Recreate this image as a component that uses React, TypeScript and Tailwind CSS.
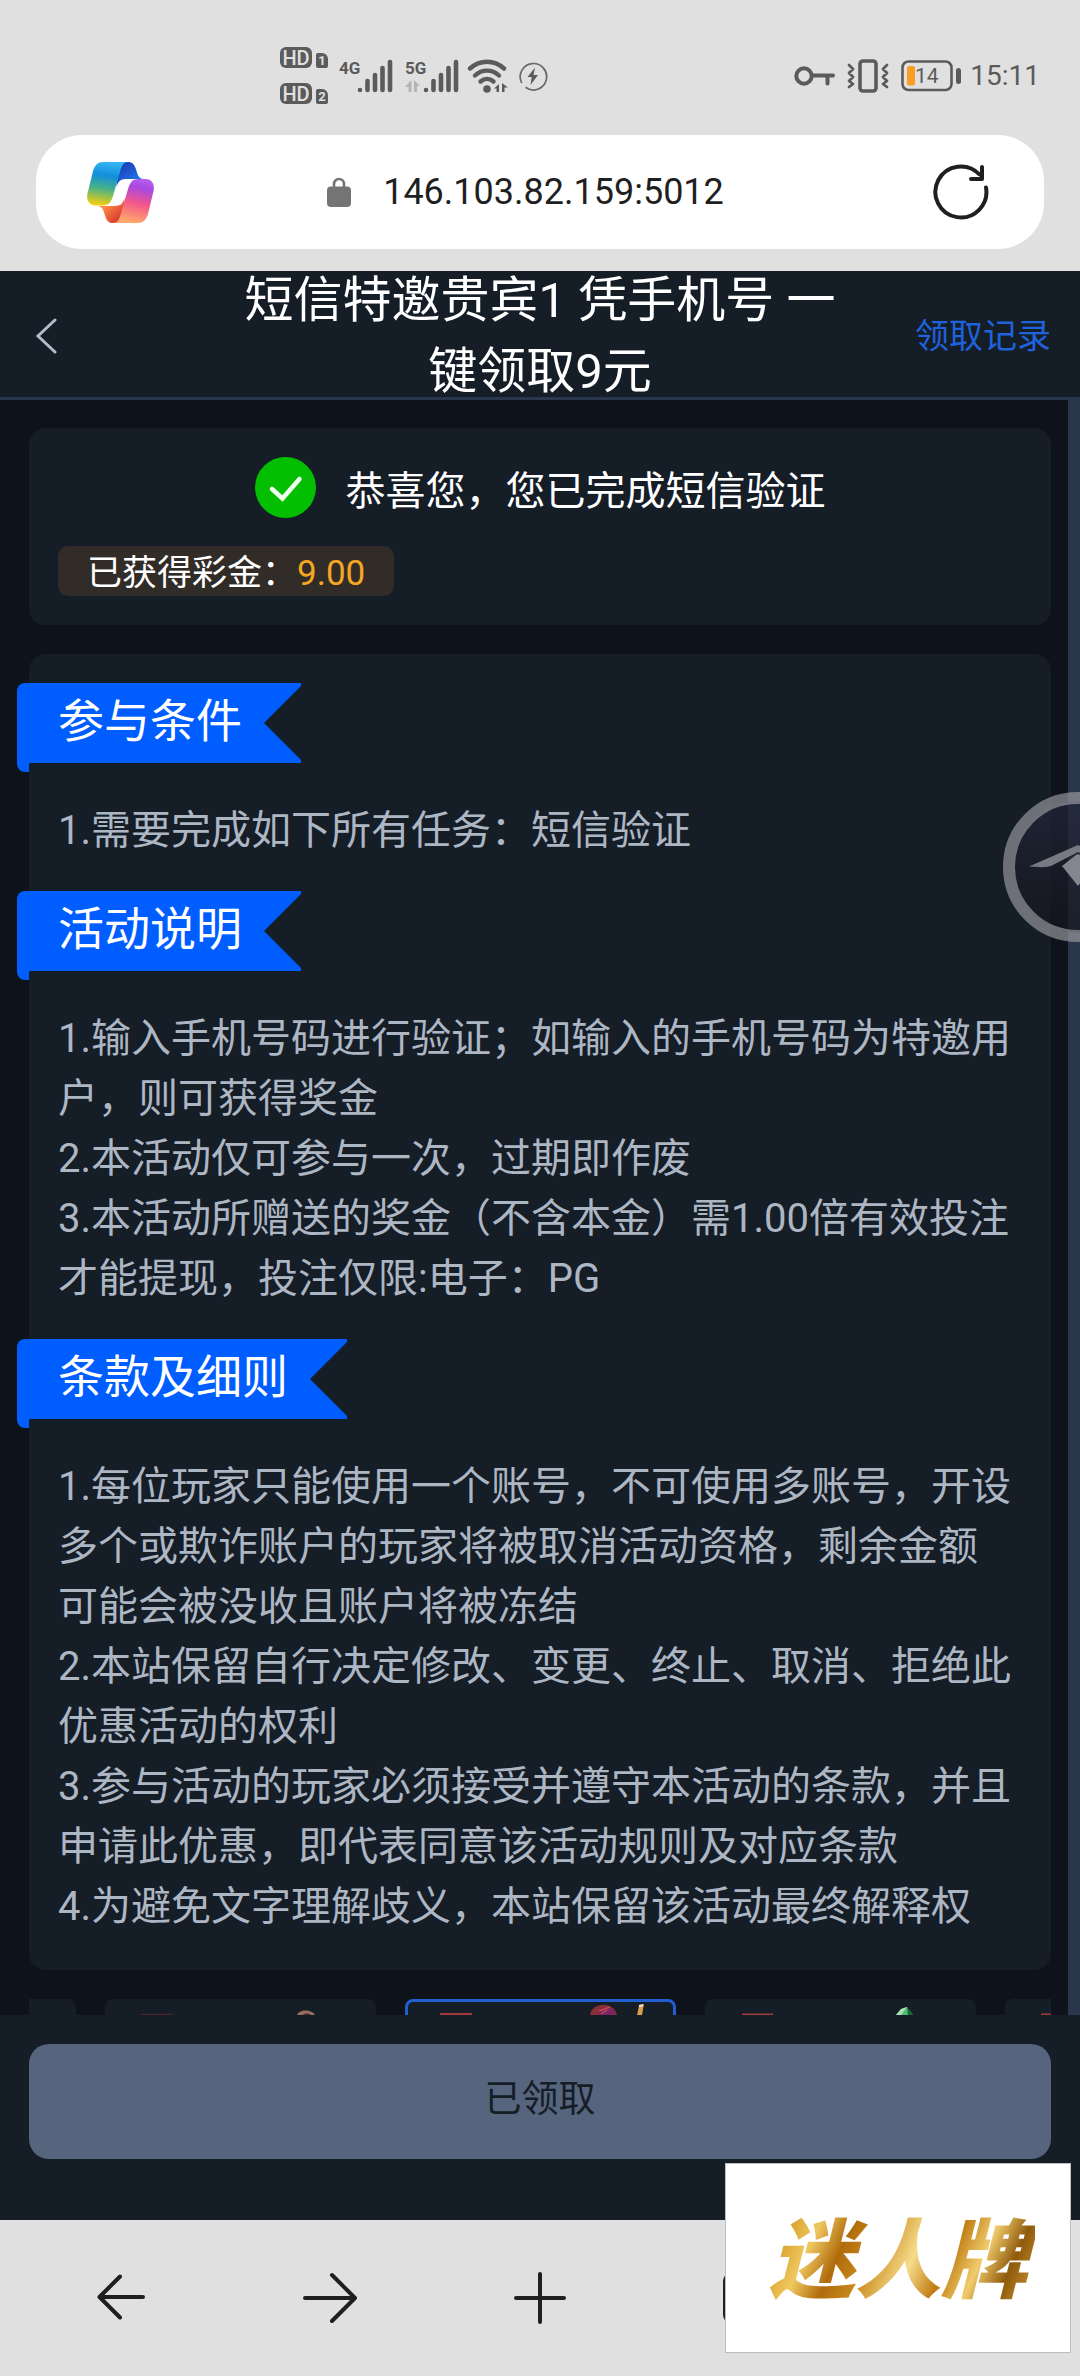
import { useState } from "react";

const sections = [
  { title: "参与条件", lines: ["1.需要完成如下所有任务：短信验证"] },
  {
    title: "活动说明",
    lines: [
      "1.输入手机号码进行验证；如输入的手机号码为特邀用户，则可获得奖金",
      "2.本活动仅可参与一次，过期即作废",
      "3.本活动所赠送的奖金（不含本金）需1.00倍有效投注才能提现，投注仅限:电子：PG",
    ],
  },
  {
    title: "条款及细则",
    lines: [
      "1.每位玩家只能使用一个账号，不可使用多账号，开设多个或欺诈账户的玩家将被取消活动资格，剩余金额可能会被没收且账户将被冻结",
      "2.本站保留自行决定修改、变更、终止、取消、拒绝此优惠活动的权利",
      "3.参与活动的玩家必须接受并遵守本活动的条款，并且申请此优惠，即代表同意该活动规则及对应条款",
      "4.为避免文字理解歧义，本站保留该活动最终解释权",
    ],
  },
];

function HdBadge({ sim }: { sim: string }) {
  return (
    <div className="flex items-end gap-1">
      <span className="flex h-[21px] w-8 items-center justify-center rounded-md bg-[#5b5b5b] text-xl leading-none font-medium text-[#e0e0e0]">
        HD
      </span>
      <span className="flex h-[15px] w-3 items-center justify-center rounded-xs rounded-tr-md bg-[#5b5b5b] text-[13px] leading-none font-bold text-[#e0e0e0]">
        {sim}
      </span>
    </div>
  );
}

function Signal({ label, data }: { label: string; data?: boolean }) {
  return (
    <svg width="54" height="34" viewBox="0 0 54 34" fill="none">
      <text x="0" y="15" fontSize="17" fontWeight="700" fill="#5b5b5b" fontFamily="'Liberation Sans Narrow', Roboto, sans-serif">
        {label}
      </text>
      {data && (
        <path d="M6.500 21v12h-3v-5H0zM9 33V21l6 6h-3v6z" fill="#b4b4b4" />
      )}
      <path
        d="M21 31v0M28.500 31V22M36 31V16M43.500 31V9M51 31V3"
        stroke="#5b5b5b"
        strokeWidth="4.600"
        strokeLinecap="round"
      />
    </svg>
  );
}

function StatusBar() {
  return (
    <div className="flex h-[135px] items-center justify-between pt-4 pr-10 pl-[280px] text-[#5b5b5b]">
      <div className="flex items-center">
        <div className="flex flex-col gap-[15px]">
          <HdBadge sim="1" />
          <HdBadge sim="2" />
        </div>
        <div className="ml-[11px] flex items-center gap-3">
          <Signal label="4G" />
          <Signal label="5G" data />
        </div>
        <svg className="ml-2" width="42" height="34" viewBox="0 0 42 34" fill="none">
          <g stroke="#5b5b5b" strokeWidth="4.400" strokeLinecap="round">
            <path d="M3 9.500C13 .5 27 .5 37 9.500" />
            <path d="M8 16.500c7-6.500 17-6.500 24 0" />
            <path d="M13.500 22.500c4-3.500 9-3.500 13 0" />
          </g>
          <circle cx="20" cy="30" r="3.800" fill="#5b5b5b" />
          <path d="M32 25v8h-2.500v-3.500H27zM35 33v-9l6 4.500h-3.500V33z" fill="#5b5b5b" />
        </svg>
        <svg className="ml-[9px]" width="30" height="30" viewBox="0 0 30 30" fill="none">
          <path d="M7.500 26.300A13.200 13.200 0 1 0 3.800 22" stroke="#6a6a6a" strokeWidth="1.700" />
          <path d="M17 6.500 9.500 16h4.200l-1.200 8L20 14h-4.500z" fill="#5b5b5b" />
        </svg>
      </div>
      <div className="flex items-center">
        <svg width="42" height="20" viewBox="0 0 42 20" fill="none" stroke="#5b5b5b">
          <circle cx="10" cy="10" r="7.700" strokeWidth="4" />
          <path d="M18 9.500h21M33.500 9.500v8" strokeWidth="4" strokeLinecap="round" />
        </svg>
        <svg className="ml-[11px]" width="42" height="34" viewBox="0 0 42 34" fill="none" stroke="#5b5b5b">
          <rect x="13" y="2" width="16" height="30" rx="3" strokeWidth="3.600" />
          <path
            d="M2 6l4 4-4 4 4 4-4 4 4 3-4 3M40 6l-4 4 4 4-4 4 4 4-4 3 4 3"
            strokeWidth="2.800"
            strokeLinecap="round"
            strokeLinejoin="round"
          />
        </svg>
        <svg className="ml-3" width="61" height="32" viewBox="0 0 61 32" fill="none">
          <rect x="1.500" y="1.500" width="49" height="28.500" rx="6" stroke="#5b5b5b" strokeWidth="2.600" />
          <rect x="6" y="6" width="8" height="19.500" rx="2.500" fill="#f99d24" />
          <rect x="55" y="8" width="5" height="16" rx="2.500" fill="#5b5b5b" />
          <text x="14" y="23" fontSize="21" fill="#5b5b5b" fontFamily="Roboto, sans-serif">
            14
          </text>
        </svg>
        <span className="ml-2 text-[28px] leading-8">15:11</span>
      </div>
    </div>
  );
}

function CopilotLogo() {
  return (
    <svg width="67" height="61" viewBox="0 0 67 61" fill="none">
      <defs>
        <linearGradient id="cool" x1="18" y1="0" x2="12" y2="43" gradientUnits="userSpaceOnUse">
          <stop offset="0" stopColor="#35b4f2" />
          <stop offset="0.300" stopColor="#118fdc" />
          <stop offset="0.600" stopColor="#45b08a" />
          <stop offset="1" stopColor="#f3d10e" />
        </linearGradient>
        <linearGradient id="warm" x1="54" y1="17" x2="44" y2="60" gradientUnits="userSpaceOnUse">
          <stop offset="0" stopColor="#b85cf0" />
          <stop offset="0.200" stopColor="#a84ae0" />
          <stop offset="0.550" stopColor="#f2558b" />
          <stop offset="1" stopColor="#ffa968" />
        </linearGradient>
        <linearGradient id="blue" x1="36" y1="2" x2="48" y2="18" gradientUnits="userSpaceOnUse">
          <stop offset="0" stopColor="#1a3fb8" />
          <stop offset="1" stopColor="#2070e6" />
        </linearGradient>
        <linearGradient id="orange" x1="18" y1="44" x2="32" y2="58" gradientUnits="userSpaceOnUse">
          <stop offset="0" stopColor="#ff8a48" />
          <stop offset="1" stopColor="#d93a30" />
        </linearGradient>
      </defs>
      <path d="M30 0h11c4 0 6 2 7.500 6l2 6c1.200 3.500 3 5 7 5H39c-6 0-8 3-9.500 8z" fill="url(#blue)" />
      <path d="M37 61H26c-4 0-6-2-7.500-6l-2-6c-1.200-3.500-3-5-7-5H28c6 0 8-3 9.500-8z" fill="url(#orange)" />
      <path d="M16 0h25c-4 0-6 3-7.500 8L26 34c-2 6-4 9.500-10 9.500H9c-7 0-10-5-8.500-12L6 9C8 3 11 0 16 0z" fill="url(#cool)" />
      <path d="M51 61H26c4 0 6-3 7.500-8L41 27c2-6 4-10 10-10h7c7 0 10 5 8.500 12L61 52c-2 6-5 9-10 9z" fill="url(#warm)" />
    </svg>
  );
}

function AddressBar() {
  return (
    <div className="mx-9 mb-[22px] flex h-[114px] items-center rounded-[46px] bg-white pr-[55px] pl-[51px]">
      <CopilotLogo />
      <div className="flex flex-1 items-center justify-center gap-8 pr-9">
        <svg width="24" height="30" viewBox="0 0 24 30" fill="none">
          <path d="M7 12V7a5 5 0 0 1 10 0v5" stroke="#747474" strokeWidth="2.600" />
          <rect y="9.500" width="24" height="20.500" rx="4" fill="#747474" />
        </svg>
        <span className="text-4xl text-[#1f1f1f]">146.103.82.159:5012</span>
      </div>
      <button type="button" aria-label="刷新">
        <svg width="56" height="56" viewBox="0 0 56 56" fill="none" stroke="#1f1f1f" strokeWidth="4" strokeLinecap="round">
          <path d="M53 23.500A25.500 25.500 0 1 1 46.500 10.500" />
          <path d="M49 3v12H38" strokeLinejoin="round" />
        </svg>
      </button>
    </div>
  );
}

function Ribbon({ title }: { title: string }) {
  return (
    <div className="-ml-[41px]">
      <h2 className="flex h-20 w-fit items-center rounded-tl-lg bg-[#005dff] pr-[59px] pb-1 pl-[41px] text-[46px] leading-none text-white [clip-path:polygon(0_0,100%_0,100%_3px,calc(100%-37px)_50%,100%_calc(100%-3px),100%_100%,0_100%)]">
        {title}
      </h2>
      <div className="h-[9px] w-3 rounded-bl-lg bg-[#005dff]" />
    </div>
  );
}

/* Row of promo cards, only the top edge peeks out above the action bar */
function PromoStrip() {
  return (
    <div className="flex h-4 justify-center gap-[29px] overflow-hidden">
      <div className="h-32 w-[271px] shrink-0 rounded-lg bg-[#151d27]" />
      <div className="h-32 w-[271px] shrink-0 rounded-lg bg-[#151d27]">
        <svg width="271" height="16" viewBox="0 0 271 16">
          <path d="M36 15.500h32" stroke="#4d2229" strokeWidth="1.500" />
          <path d="M192 16c2-6 15-6 18 0z" fill="#96705f" />
          <path d="M198 16c1-2 6-2 8 0z" fill="#3b2b2b" />
        </svg>
      </div>
      <div className="h-32 w-[271px] shrink-0 rounded-lg border-3 border-[#1f5fd0] bg-[#151d27]">
        <svg width="265" height="13" viewBox="0 0 265 13">
          <path d="M32 12h32" stroke="#a53a3a" strokeWidth="2" />
          <path d="M182 13c1-12 23-15 27 0z" fill="#872f35" />
          <path d="M190 13c0-8 10-10 15-5l2 5z" fill="#7d2368" />
          <path d="M191 9l11-4M193 12l6-4" stroke="#c94a4a" strokeWidth="1.500" />
          <path d="M229 13l2-9 5-2-2 11z" fill="#d9a04b" />
          <path d="M231 4l4-1" stroke="#f0e6e0" strokeWidth="2" />
        </svg>
      </div>
      <div className="h-32 w-[271px] shrink-0 rounded-lg bg-[#151d27]">
        <svg width="271" height="16" viewBox="0 0 271 16">
          <path d="M37 15.500h31" stroke="#a53a3a" strokeWidth="2" />
          <path d="M191 16l5-6 6-2 6 8z" fill="#54ba72" />
          <path d="M191 16l5-6 6-2-6 8z" fill="#a5e3b3" />
          <path d="M202 8l1 8h5z" fill="#14683a" />
        </svg>
      </div>
      <div className="h-32 w-[271px] shrink-0 rounded-lg bg-[#151d27]">
        <svg width="271" height="16" viewBox="0 0 271 16">
          <path d="M36 15.500h31" stroke="#a53a3a" strokeWidth="2" />
        </svg>
      </div>
    </div>
  );
}

function FloatingHandle() {
  return (
    <button type="button" aria-label="悬浮球" className="absolute top-[392px] -right-[73px]">
      <svg width="150" height="150" viewBox="0 0 150 150" fill="none">
        <defs>
          <linearGradient id="ball" x1="0" y1="0" x2="0" y2="1">
            <stop offset="0" stopColor="#23263a" />
            <stop offset="1" stopColor="#14151b" />
          </linearGradient>
        </defs>
        <circle cx="75" cy="75" r="66" fill="url(#ball)" fillOpacity="0.700" />
        <circle cx="75" cy="75" r="69" stroke="#a3a5aa" strokeOpacity="0.620" strokeWidth="12" />
        <path d="M26 74.500 75 53l49 21.500c-12 1-18 1-23-1L75 60 49 73.500c-5 2-11 2-23 1z" fill="#777a82" />
        <path d="M59 74l14-11c1-1 3-1 4 0l14 11-16 20z" fill="#83868f" />
      </svg>
    </button>
  );
}

function BrowserNav() {
  const icon = "size-14 text-[#1f1f1f]";
  return (
    <nav className="grid h-[156px] grid-cols-5 place-items-center bg-[#e0e0e0] px-4">
      <button type="button" aria-label="后退">
        <svg className={icon} viewBox="0 0 56 56" fill="none" stroke="currentColor" strokeWidth="4" strokeLinecap="round" strokeLinejoin="round">
          <path d="M50 27H7M27 6.500 6.500 27 27 47.500" />
        </svg>
      </button>
      <button type="button" aria-label="前进">
        <svg className={icon} viewBox="0 0 56 56" fill="none" stroke="currentColor" strokeWidth="4" strokeLinecap="round" strokeLinejoin="round">
          <path d="M3 28h50M30 5l23 23-23 23" />
        </svg>
      </button>
      <button type="button" aria-label="新建标签页">
        <svg className={icon} viewBox="0 0 56 56" fill="none" stroke="currentColor" strokeWidth="4" strokeLinecap="round">
          <path d="M28 4v48M4 28h48" />
        </svg>
      </button>
      <button type="button" aria-label="标签页">
        <svg className={icon} viewBox="0 0 56 56" fill="none" stroke="currentColor" strokeWidth="4">
          <rect x="3" y="3" width="50" height="50" rx="9" />
        </svg>
      </button>
    </nav>
  );
}

export default function App() {
  const [claimed] = useState(true);

  return (
    <div className="relative flex min-h-screen flex-col overflow-hidden bg-[#0e131b] font-[Roboto,'Noto_Sans_CJK_SC',sans-serif]">
      {/* ── Browser chrome ── */}
      <div className="bg-[#e0e0e0]">
        <StatusBar />
        <AddressBar />
      </div>

      {/* ── Page header ── */}
      <header className="grid h-[129px] grid-cols-[240px_1fr_240px] content-center items-center border-b-3 border-[#2a364b] bg-[#151d27] pt-1">
        <button type="button" aria-label="返回" className="w-fit pl-[34px]">
          <svg width="24" height="36" viewBox="0 0 24 36" fill="none" stroke="#b3bbca" strokeWidth="3" strokeLinecap="round">
            <path d="M21 2 4 18l17 16" />
          </svg>
        </button>
        <h1 className="text-center text-[49px] leading-[71px] text-white">
          短信特邀贵宾1 凭手机号 一键领取9元
        </h1>
        <a href="#records" className="pr-[29px] text-right text-[34px] text-[#1f62dc]">
          领取记录
        </a>
      </header>

      {/* ── Content ── */}
      <main className="relative flex flex-1">
        <div className="flex min-w-0 flex-1 flex-col gap-[29px] pt-7 pr-[17px] pl-[29px]">
          <section className="rounded-2xl bg-[#151d27] p-[29px]">
            <div className="flex h-[61px] items-center justify-center gap-[30px]">
              <svg width="61" height="61" viewBox="0 0 61 61" fill="none">
                <circle cx="30.500" cy="30.500" r="30.500" fill="#04be02" />
                <path d="M17 32l10.500 9.500L44.500 22" stroke="#f1fff0" strokeWidth="4.500" strokeLinecap="round" />
              </svg>
              <p className="pt-2 text-[40px] leading-[60px] text-white">恭喜您，您已完成短信验证</p>
            </div>
            <p className="mt-7 flex h-[50px] w-fit items-center rounded-[10px] bg-[#312c27] px-[29px] pt-1 text-[35px] leading-none text-white">
              已获得彩金：<span className="text-[#f5a623]">9.00</span>
            </p>
          </section>

          <section className="flex flex-col gap-[30px] rounded-2xl bg-[#151d27] pt-[29px] pr-9 pb-[33px] pl-[29px]">
            {sections.map((section) => (
              <div key={section.title}>
                <Ribbon title={section.title} />
                <div className="mt-[29px] text-[40px] leading-[60px] text-[#adb6c3]">
                  {section.lines.map((line) => (
                    <p key={line}>{line}</p>
                  ))}
                </div>
              </div>
            ))}
          </section>

          <PromoStrip />
        </div>
        <div className="w-3 bg-[#2a364b]" />
        <FloatingHandle />
      </main>

      {/* ── Claim button ── */}
      <div className="bg-[#151d27] px-[29px] pt-[29px] pb-[61px]">
        <button
          type="button"
          disabled={claimed}
          className="h-[115px] w-full rounded-[20px] bg-[#56657d] pb-1 text-[37px] text-[#151d27]"
        >
          已领取
        </button>
      </div>

      <BrowserNav />

      <div className="absolute right-[9px] bottom-[23px] flex h-[190px] w-[346px] items-center justify-center border border-[#bcbec2] bg-white pb-2">
        <span className="bg-[linear-gradient(115deg,#a87412_0%,#d69c2a_12%,#f0c860_22%,#b06c0c_32%,#c98a1c_42%,#f6dc8c_55%,#c07c12_66%,#f0cc6c_76%,#8f5a0c_86%,#dca63a_100%)] bg-clip-text px-2 font-['Noto_Sans_CJK_SC',sans-serif] text-[86px] leading-[120px] font-black text-transparent italic">
          迷人牌
        </span>
      </div>
    </div>
  );
}
